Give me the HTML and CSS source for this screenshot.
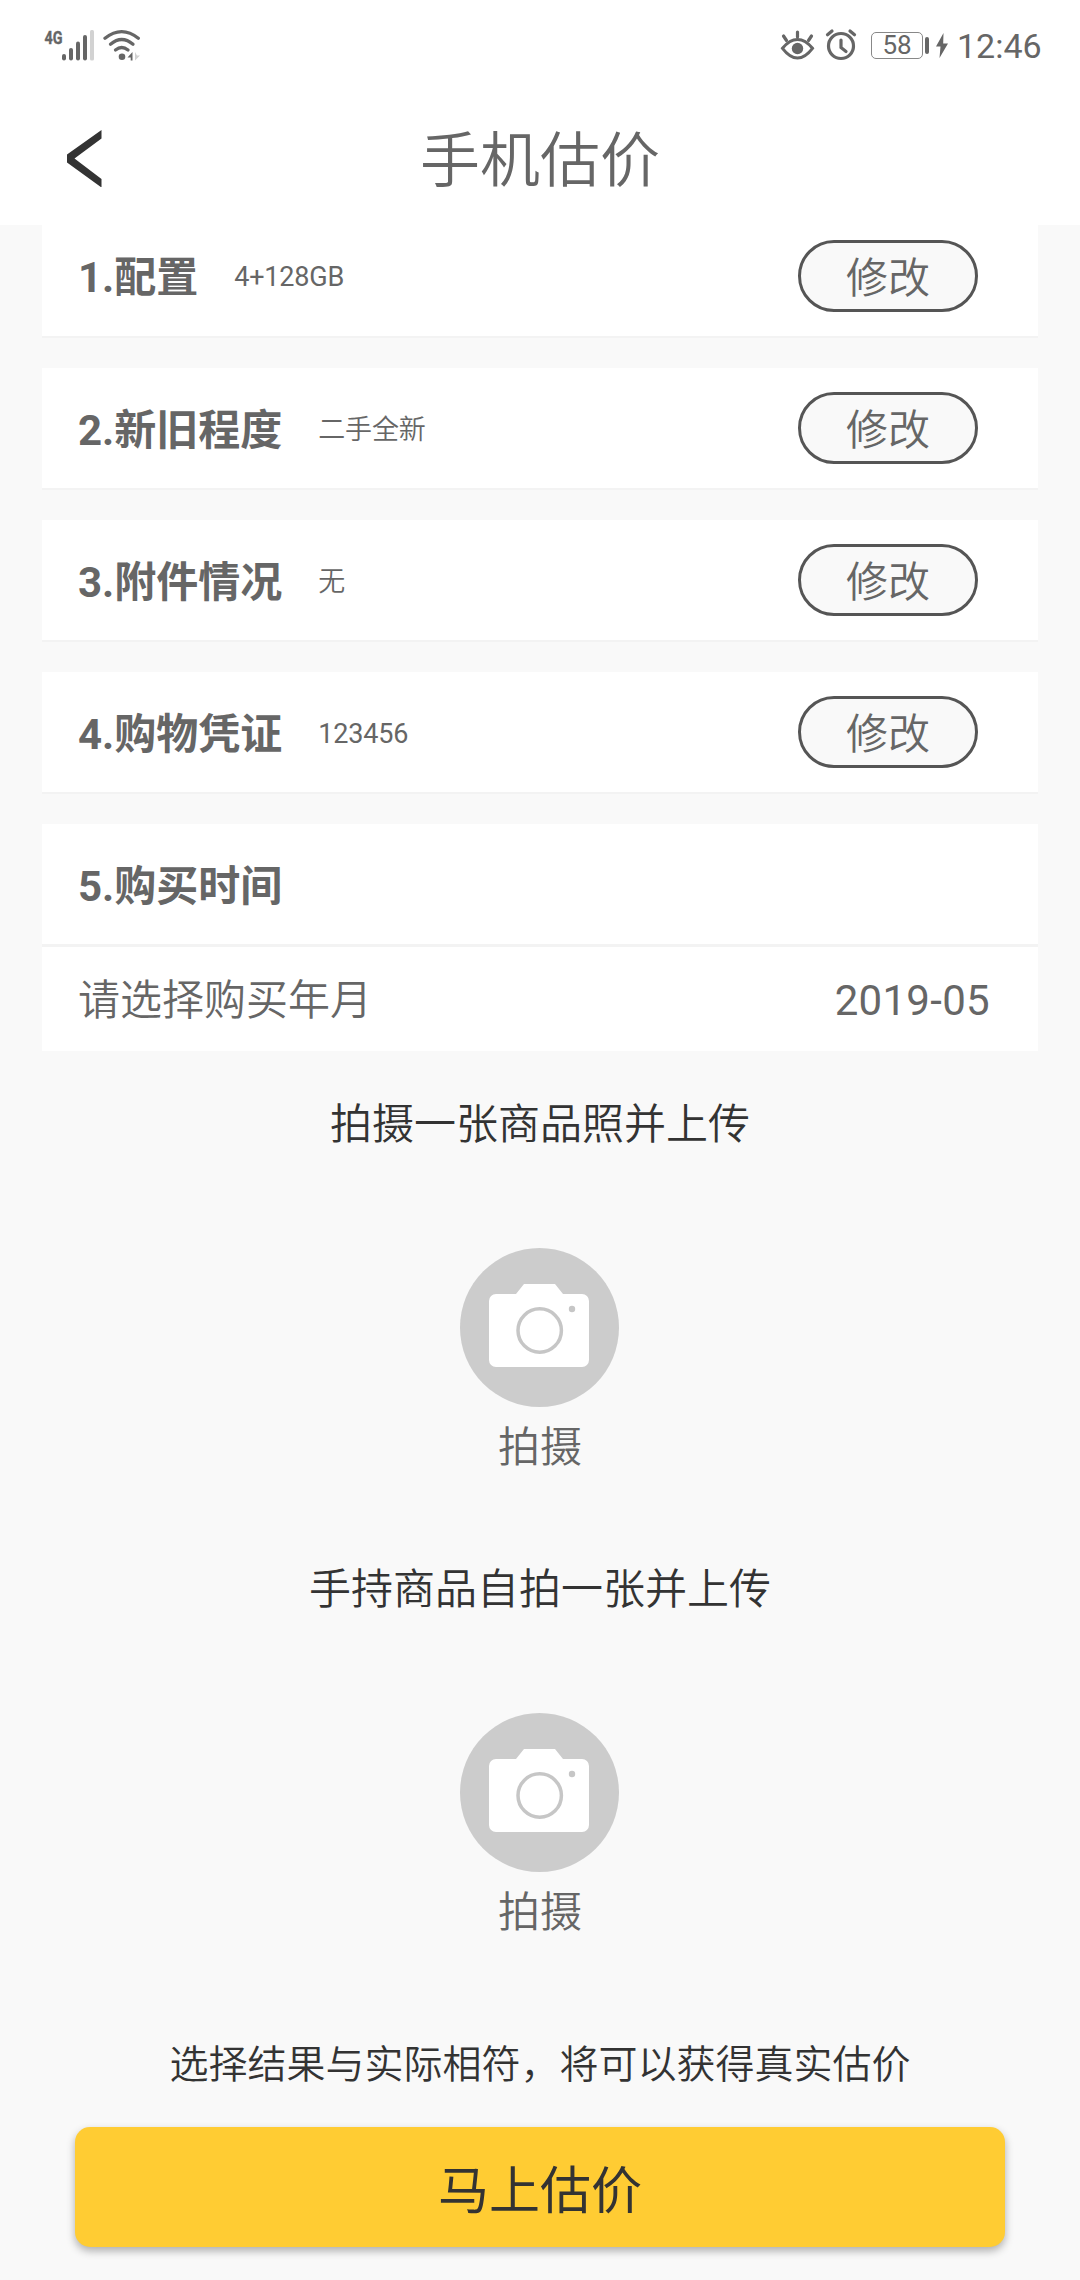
FILE: index.html
```html
<!DOCTYPE html>
<html lang="zh-CN">
<head>
<meta charset="utf-8">
<title>手机估价</title>
<link rel="stylesheet" href="styles.css">
</head>
<body>
<header class="header">
  <div class="status">
    <svg class="status-left" width="100" height="36" viewBox="42 26 100 36">
      <text class="net" x="44.5" y="43.5" textLength="18" lengthAdjust="spacingAndGlyphs">4G</text>
      <g fill="#666">
        <rect x="62" y="54" width="4" height="6.5" rx="2"/>
        <rect x="69" y="48" width="4" height="12.500" rx="2"/>
        <rect x="76" y="41.500" width="4" height="19" rx="2"/>
        <rect x="83" y="35" width="4" height="25.500" rx="2"/>
        <circle cx="122" cy="56.700" r="3.300"/>
        <path d="M132.500 52v8.500h-1.800v-3h-3.200z"/>
      </g>
      <rect x="90" y="30" width="4" height="30.500" rx="1.500" fill="#d2d2d2"/>
      <path d="M135 52v8.500l5-5h-3z" fill="#d2d2d2"/>
      <g fill="none" stroke="#666" stroke-width="3.300" stroke-linecap="round">
        <path d="M105 38.300Q121.700 25 138.300 38.300"/>
        <path d="M110.500 44.300Q121.700 34.800 133 44.300"/>
        <path d="M115.500 50Q121.700 45 128 50"/>
      </g>
    </svg>
    <div class="status-right">
      <svg width="78" height="34" viewBox="780 28 78 34" fill="none" stroke="#666" stroke-linecap="round">
        <path d="M782.500 48.300C788 41.500 792.500 39.500 797.500 39.500s9.500 2 15 8.800C807 55.500 802.500 58 797.500 58s-9.500-2.500-15-9.700z" stroke-width="3"/>
        <circle cx="797.500" cy="48.500" r="5.700" fill="#666" stroke="none"/>
        <path d="M797.500 32v5M783.500 36l3 4.500M811.500 36l-3 4.500" stroke-width="3.200"/>
        <circle cx="841" cy="46" r="12.500" stroke-width="3.200"/>
        <path d="M841 40v7.500l5 4" stroke-width="3.200"/>
        <path d="M827.500 34.800l4.500-3.800M854.500 34.800L850 31" stroke-width="3.200"/>
      </svg>
      <div class="battery">58</div>
      <svg class="charge" width="24" height="34" viewBox="925 28 24 34" fill="#666">
        <rect x="925" y="37" width="4" height="17" rx="2"/>
        <path d="M943.500 33L936 46.500h4.500L939.500 58l8.500-14.500h-4.800z"/>
      </svg>
      <time class="clock">12:46</time>
    </div>
  </div>
  <div class="navbar">
    <svg class="back" width="36" height="58" viewBox="66 128 36 58" fill="#333">
      <path d="M101.500 129v8.500L74.500 157.500 101.500 178v8.500L67 161.500v-8z"/>
    </svg>
    <h1 class="title">手机估价</h1>
  </div>
</header>
<main class="content">
  <section class="card first"><h2>1.配置</h2><span class="value">4+128GB</span><button class="edit">修改</button></section>
  <section class="card"><h2>2.新旧程度</h2><span class="value">二手全新</span><button class="edit">修改</button></section>
  <section class="card"><h2>3.附件情况</h2><span class="value">无</span><button class="edit">修改</button></section>
  <section class="card"><h2>4.购物凭证</h2><span class="value">123456</span><button class="edit">修改</button></section>
  <section class="purchase">
    <div class="card"><h2>5.购买时间</h2></div>
    <div class="date-row"><span>请选择购买年月</span><span class="date">2019-05</span></div>
  </section>
  <section class="upload">
    <p class="prompt">拍摄一张商品照并上传</p>
    <svg class="camera" viewBox="0 0 159 159">
      <circle cx="79.500" cy="79.500" r="79.500" fill="#ccc"/>
      <path d="M36 46h20l8-10h31l8 10h19a7 7 0 0 1 7 7v59a7 7 0 0 1-7 7H36a7 7 0 0 1-7-7V53a7 7 0 0 1 7-7z" fill="#fff"/>
      <circle cx="79.700" cy="82.500" r="21.700" fill="none" stroke="#c6c6c6" stroke-width="3.500"/>
      <circle cx="112" cy="61" r="3.200" fill="#c6c6c6"/>
    </svg>
    <span class="shoot">拍摄</span>
  </section>
  <section class="upload">
    <p class="prompt">手持商品自拍一张并上传</p>
    <svg class="camera" viewBox="0 0 159 159">
      <circle cx="79.500" cy="79.500" r="79.500" fill="#ccc"/>
      <path d="M36 46h20l8-10h31l8 10h19a7 7 0 0 1 7 7v59a7 7 0 0 1-7 7H36a7 7 0 0 1-7-7V53a7 7 0 0 1 7-7z" fill="#fff"/>
      <circle cx="79.700" cy="82.500" r="21.700" fill="none" stroke="#c6c6c6" stroke-width="3.500"/>
      <circle cx="112" cy="61" r="3.200" fill="#c6c6c6"/>
    </svg>
    <span class="shoot">拍摄</span>
  </section>
</main>
<footer class="footer">
  <p class="hint">选择结果与实际相符，将可以获得真实估价</p>
  <button class="submit">马上估价</button>
</footer>
</body>
</html>
```
FILE: styles.css
```css
* { box-sizing: border-box; }
body {
  margin: 0;
  height: 2280px;
  overflow: hidden;
  display: flex;
  flex-direction: column;
  background: #f9f9f9;
  color: #666;
  font-family: Roboto, "Noto Sans CJK SC DemiLight", "Noto Sans CJK SC", sans-serif;
  font-size: 42px;
}
h1, h2, p { margin: 0; }
button { font-family: inherit; padding: 0; }
.header { height: 225px; flex: none; background: #fff; }
.status {
  height: 90px;
  padding: 0 38px 0 42px;
  display: flex;
  justify-content: space-between;
  align-items: center;
}
.status-left { margin-bottom: 2px; }
.net { font: bold 19px Roboto, sans-serif; fill: #666; stroke: #666; stroke-width: .4px; }
.status-right { display: flex; align-items: center; }
.battery {
  width: 52px;
  height: 27px;
  margin: 0 2px 0 13px;
  border: 1.5px solid #888;
  border-radius: 5px;
  font-size: 26px;
  line-height: 25px;
  text-align: center;
}
.clock { width: 85px; margin-left: 8px; font-size: 34px; line-height: 40px; padding-top: 2px; }
.navbar {
  height: 135px;
  padding: 0 66px;
  display: grid;
  grid-template-columns: 36px 1fr 36px;
  align-items: center;
}
.title {
  padding-bottom: 3px;
  font-family: "Noto Sans CJK SC DemiLight", "Noto Sans CJK SC", sans-serif;
  font-size: 60px;
  font-weight: 400;
  line-height: 90px;
  text-align: center;
}
.content { padding: 0 42px; flex: none; }
.card {
  height: 122px;
  margin-bottom: 30px;
  padding: 0 60px 0 36px;
  display: flex;
  align-items: center;
  background: #fff;
  border-bottom: 2px solid #f3f3f3;
}
.card h2 {
  padding-top: 5px;
  font-family: Roboto, "Noto Sans CJK SC", sans-serif;
  font-size: 42px;
  font-weight: 700;
  line-height: 62px;
}
.first { height: 113px; padding-bottom: 9px; align-items: flex-start; }
.first h2 { margin-top: 17px; }
.first .value { margin-top: 29px; }
.first .edit { margin-top: 15px; }
.value { margin-left: 36px; padding-top: 3px; font-size: 27px; line-height: 40px; letter-spacing: -.2px; }
.edit {
  width: 180px;
  height: 72px;
  padding-top: 5px;
  margin-left: auto;
  border: 3px solid #555;
  border-radius: 36px;
  background: #f9f9f9;
  color: #666;
  font-size: 42px;
  line-height: 61px;
}
.purchase .card { height: 123px; margin: 0; border-bottom-width: 3px; }
.date-row {
  height: 104px;
  padding: 4px 48px 0 36px;
  display: flex;
  justify-content: space-between;
  align-items: center;
  background: #fff;
  line-height: 62px;
}
.date { letter-spacing: .3px; }
.upload {
  height: 465px;
  display: flex;
  flex-direction: column;
  align-items: center;
}
.prompt { margin-top: 43px; line-height: 62px; color: #333; }
.camera { width: 159px; height: 159px; margin: 92px 1px 0 0; flex: none; }
.shoot { margin-top: 10px; line-height: 62px; }
.footer {
  margin-top: 55px;
  padding: 0 75px;
  display: flex;
  flex-direction: column;
  align-items: center;
}
.hint { color: #333; font-size: 39px; line-height: 58px; white-space: nowrap; }
.submit {
  width: 930px;
  height: 120px;
  margin-top: 33px;
  border: 0;
  border-radius: 15px;
  background: #fc3;
  box-shadow: 0 4px 8px rgba(0, 0, 0, .3);
  color: #333;
  font-family: "Noto Sans CJK SC", sans-serif;
  font-size: 51px;
  font-weight: 400;
}
```
